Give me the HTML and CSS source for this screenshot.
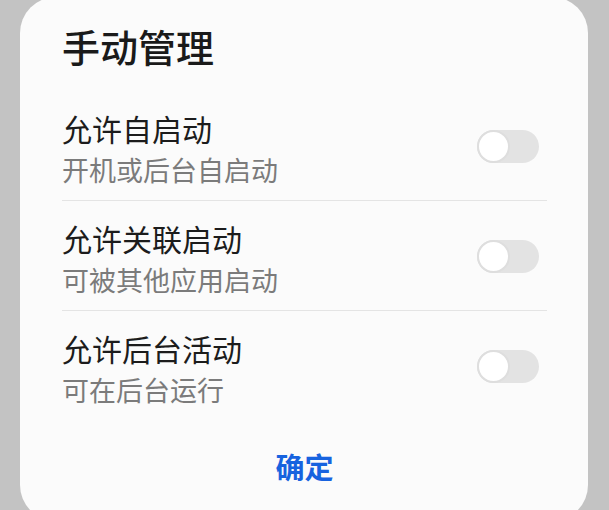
FILE: index.html
```html
<!DOCTYPE html>
<html lang="zh-CN">
<head>
<meta charset="utf-8">
<title>手动管理</title>
<link rel="stylesheet" href="styles.css">
</head>
<body>
<div class="dialog">
  <h1 class="title">手动管理</h1>
  <div class="list">
    <div class="row">
      <div class="text">
        <div class="label">允许自启动</div>
        <div class="sub">开机或后台自启动</div>
      </div>
      <div class="switch"><span class="knob"></span></div>
    </div>
    <div class="row">
      <div class="text">
        <div class="label">允许关联启动</div>
        <div class="sub">可被其他应用启动</div>
      </div>
      <div class="switch"><span class="knob"></span></div>
    </div>
    <div class="row last">
      <div class="text">
        <div class="label">允许后台活动</div>
        <div class="sub">可在后台运行</div>
      </div>
      <div class="switch"><span class="knob"></span></div>
    </div>
  </div>
  <div class="actions">
    <span class="ok">确定</span>
  </div>
</div>
</body>
</html>
```

FILE: styles.css
```css
html, body {
  margin: 0;
  padding: 0;
  height: 100%;
  overflow: hidden;
}
body {
  background: #c3c3c3;
  font-family: "Noto Sans CJK SC", "Noto Sans", sans-serif;
}
.dialog {
  box-sizing: border-box;
  margin: -3px 0 0 20px;
  width: 568px;
  height: 524px;
  background: #fbfbfb;
  border-radius: 36px;
  padding: 27px 41px 0 42px;
}
.title {
  margin: 0 0 23px 0;
  font-size: 38px;
  line-height: 44px;
  font-weight: 500;
  color: #1a1a1a;
}
.row {
  display: flex;
  align-items: center;
  justify-content: space-between;
  padding: 19px 8px 14px 0;
  border-bottom: 1px solid #e4e4e4;
}
.row.last {
  border-bottom: none;
}
.text {
  display: flex;
  flex-direction: column;
  gap: 7px;
}
.label {
  font-size: 30px;
  line-height: 36px;
  color: #1c1c1c;
}
.sub {
  font-size: 27px;
  line-height: 33px;
  color: #7b7b7b;
}
.switch {
  position: relative;
  width: 62px;
  height: 33px;
  border-radius: 17px;
  background: #e3e3e3;
  margin-top: -3px;
}
.knob {
  position: absolute;
  left: 0;
  top: 0;
  box-sizing: border-box;
  width: 33px;
  height: 33px;
  border-radius: 50%;
  background: #ffffff;
  border: 2px solid #dedede;
}
.actions {
  display: flex;
  justify-content: center;
  padding-top: 28px;
}
.ok {
  font-size: 29px;
  line-height: 36px;
  font-weight: 700;
  color: #1763df;
}
```
